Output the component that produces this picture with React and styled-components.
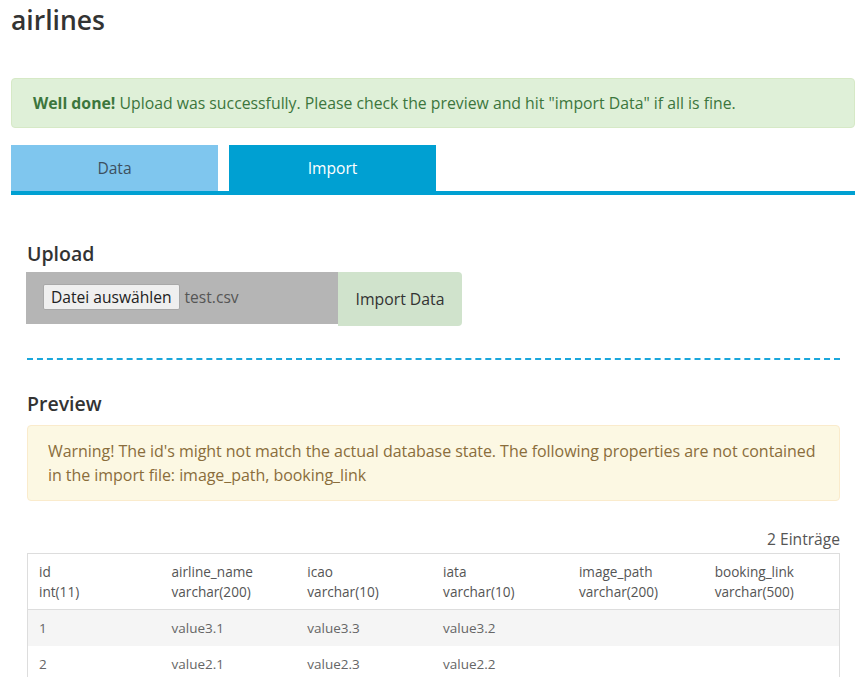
import React from 'react';
import styled, { createGlobalStyle } from 'styled-components';

const GlobalStyle = createGlobalStyle`
  * { box-sizing: border-box; }
  body {
    margin: 0;
    background: #fff;
    font-family: "Open Sans", "Noto Sans", sans-serif;
    color: #333;
  }
`;

const Page = styled.div`
  padding: 0 11px;
`;

const Title = styled.h1`
  margin: 0;
  padding-top: 2px;
  font-size: 26.5px;
  font-weight: 600;
  line-height: 36px;
  color: #333;
`;

const Alert = styled.div`
  margin-top: 40px;
  padding: 14px 21px;
  border: 1px solid ${(p) => (p.$warning ? '#faebcc' : '#d6e9c6')};
  border-radius: 4px;
  background: ${(p) => (p.$warning ? '#fcf8e3' : '#dff0d8')};
  color: ${(p) => (p.$warning ? '#8a6d3b' : '#3c763d')};
  font-size: 15.8px;
  line-height: ${(p) => (p.$warning ? '24px' : '20px')};

  strong { font-weight: 700; }
`;

const TabBar = styled.nav`
  display: flex;
  gap: 11px;
  margin-top: 17px;
  border-bottom: 4px solid #00a0d2;
`;

const Tab = styled.div`
  width: 207px;
  height: 46px;
  display: flex;
  align-items: center;
  justify-content: center;
  font-size: 15.6px;
  background: ${(p) => (p.$active ? '#00a0d2' : '#7fc6ee')};
  color: ${(p) => (p.$active ? '#fff' : '#3d5060')};
`;

const Section = styled.section`
  padding: 0 15px 0 16px;
`;

const SectionTitle = styled.h3`
  margin: 0;
  font-size: 19.5px;
  font-weight: 600;
  line-height: 26px;
  color: #333;
`;

const UploadSection = styled(Section)`
  padding-top: 46px;
`;

const UploadRow = styled.div`
  display: flex;
  align-items: flex-start;
  margin-top: 5px;
  margin-left: -1px;
`;

const FileBox = styled.div`
  width: 312px;
  height: 52px;
  background: #b5b5b5;
  display: flex;
  align-items: center;
  padding-left: 17px;
  gap: 5px;
  padding-bottom: 3px;
`;

const FileButton = styled.button`
  height: 26px;
  padding: 0 7px;
  font-family: inherit;
  font-size: 15.6px;
  color: #222;
  background: #efefef;
  border: 1px solid #a8a8a8;
  border-radius: 2px;
`;

const FileName = styled.span`
  font-size: 15.6px;
  color: #555;
`;

const ImportButton = styled.button`
  width: 124px;
  height: 54px;
  border: none;
  border-radius: 0 4px 4px 0;
  background: #d0e3cc;
  font-family: inherit;
  font-size: 15.8px;
  color: #333;
`;

const Divider = styled.hr`
  margin: 32px 0 0;
  border: none;
  border-top: 2px dashed #1aa7dc;
`;

const PreviewSection = styled(Section)`
  padding-top: 31px;
`;

const PreviewAlert = styled(Alert)`
  margin-top: 8px;
  padding: 13px 20px;
  font-size: 16px;
  letter-spacing: -0.05px;
`;

const Count = styled.div`
  margin-top: 28px;
  text-align: right;
  font-size: 15.6px;
  line-height: 20px;
  color: #555;
`;

const Table = styled.table`
  width: 100%;
  margin-top: 4px;
  border-collapse: collapse;
  table-layout: fixed;
  border: 1px solid #ddd;
  font-size: 13.5px;
  color: #666;

  col:first-child { width: 133px; }

  th {
    text-align: left;
    font-weight: 400;
    font-size: 13.6px;
    color: #555;
    padding: 8px 11px 7px;
    line-height: 20px;
    border-bottom: 1px solid #ddd;
  }

  td {
    padding: 8px 11px;
    line-height: 20px;
  }

  tbody tr:nth-child(odd) { background: #f5f5f5; }
`;

const columns = [
  ['id', 'int(11)'],
  ['airline_name', 'varchar(200)'],
  ['icao', 'varchar(10)'],
  ['iata', 'varchar(10)'],
  ['image_path', 'varchar(200)'],
  ['booking_link', 'varchar(500)'],
];

const rows = [
  ['1', 'value3.1', 'value3.3', 'value3.2', '', ''],
  ['2', 'value2.1', 'value2.3', 'value2.2', '', ''],
];

const App = () => {
  return (
    <Page>
      <GlobalStyle />
      <Title>airlines</Title>
      <Alert>
        <strong>Well done!</strong> Upload was successfully. Please check the preview and hit "import Data" if all is fine.
      </Alert>
      <TabBar>
        <Tab>Data</Tab>
        <Tab $active>Import</Tab>
      </TabBar>

      <UploadSection>
        <SectionTitle>Upload</SectionTitle>
        <UploadRow>
          <FileBox>
            <FileButton>Datei auswählen</FileButton>
            <FileName>test.csv</FileName>
          </FileBox>
          <ImportButton>Import Data</ImportButton>
        </UploadRow>
        <Divider />
      </UploadSection>

      <PreviewSection>
        <SectionTitle>Preview</SectionTitle>
        <PreviewAlert $warning>
          Warning! The id's might not match the actual database state. The following properties are not contained in the import file: image_path, booking_link
        </PreviewAlert>
        <Count>2 Einträge</Count>
        <Table>
          <colgroup>
            {columns.map(([name]) => (
              <col key={name} />
            ))}
          </colgroup>
          <thead>
            <tr>
              {columns.map(([name, type]) => (
                <th key={name}>
                  {name}
                  <br />
                  {type}
                </th>
              ))}
            </tr>
          </thead>
          <tbody>
            {rows.map((row) => (
              <tr key={row[0]}>
                {row.map((cell, i) => (
                  <td key={i}>{cell}</td>
                ))}
              </tr>
            ))}
          </tbody>
        </Table>
      </PreviewSection>
    </Page>
  );
};

export default App;
